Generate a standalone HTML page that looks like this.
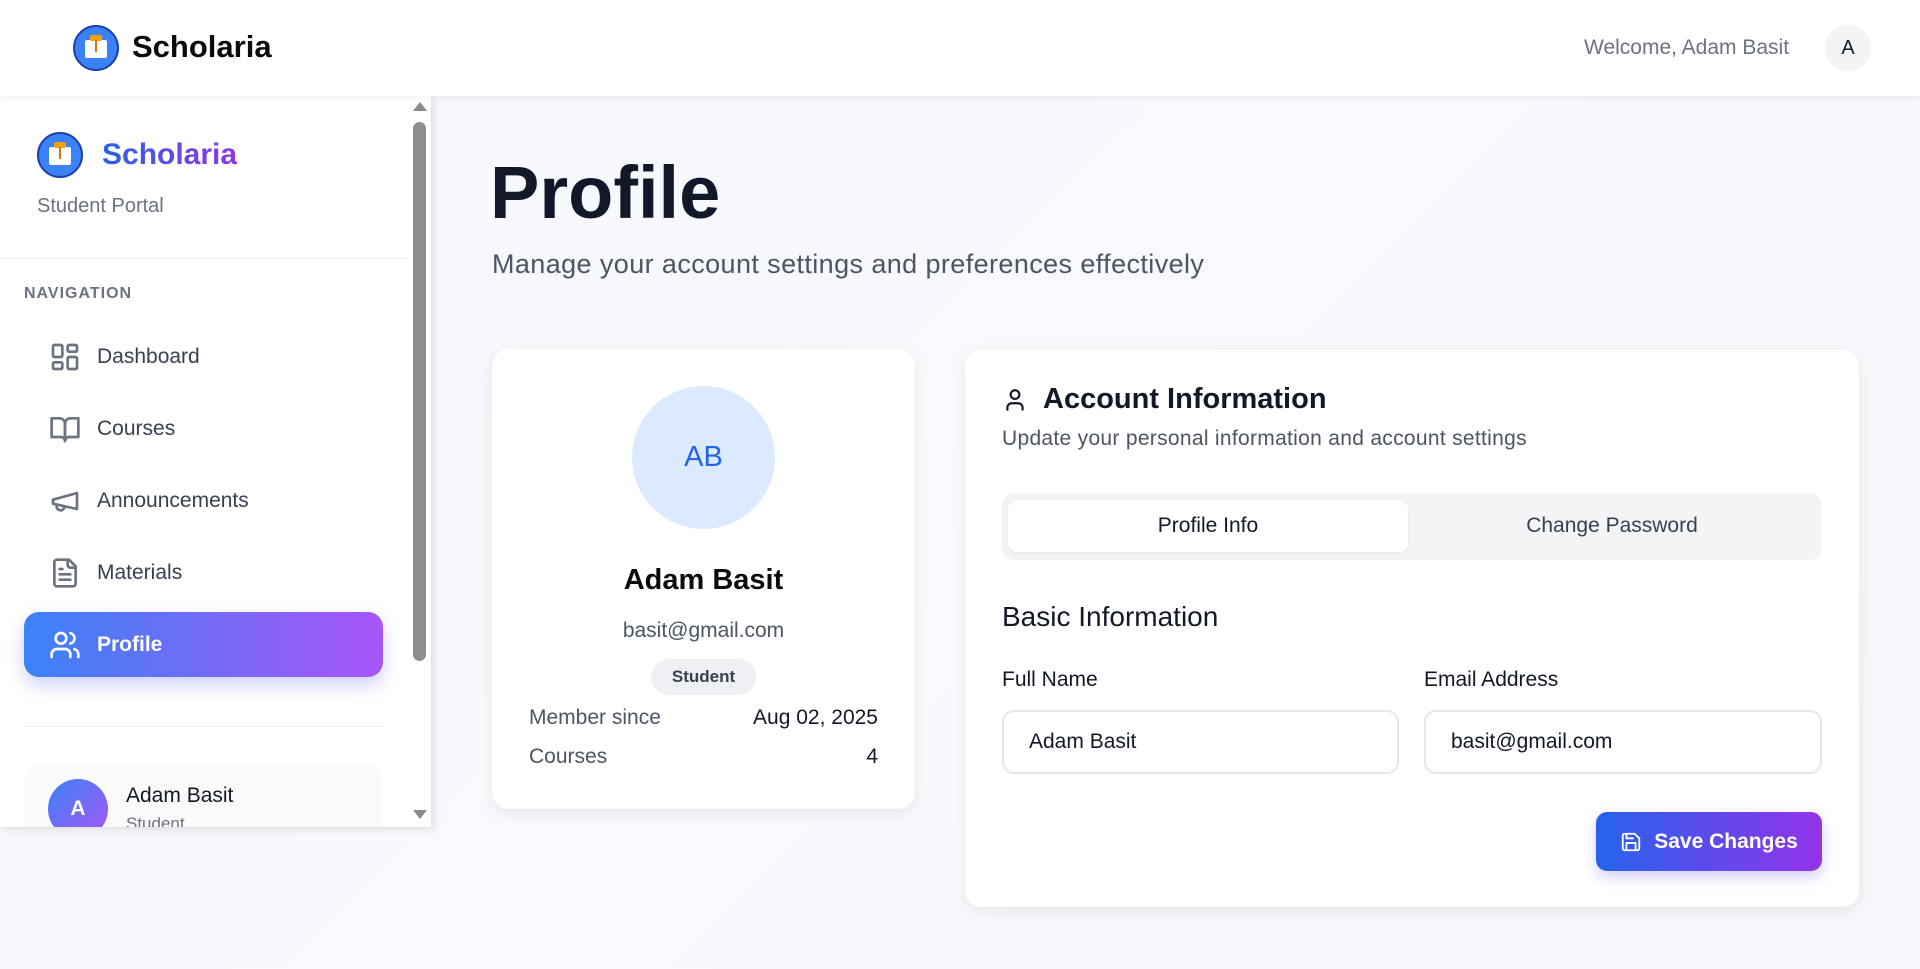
<!DOCTYPE html>
<html><head><meta charset="utf-8"><style>
*{box-sizing:border-box;margin:0;padding:0}
body{width:1920px;height:969px;overflow:hidden;font-family:"Liberation Sans",sans-serif;background:linear-gradient(135deg,#f5f7fd 0%,#f8f9fc 50%,#f6f7fb 100%);position:relative;color:#111827}
.a{position:absolute}
.hdr{left:0;top:0;width:1920px;height:96px;background:#fff;box-shadow:0 2px 6px rgba(0,0,0,.06);z-index:3}
.logo{width:46px;height:46px;border-radius:50%;background:#3b82f6;border:2px solid #1e40af}
.logo i{position:absolute;left:10px;top:13px;width:22px;height:18px;background:#fff;border-radius:2px}
.logo b{position:absolute;left:15px;top:8px;width:12px;height:6px;background:#f59e0b;border-radius:2px}
.logo u{position:absolute;left:20px;top:13px;width:2px;height:12px;background:#d97706}
.side{left:0;top:96px;width:431px;height:731px;background:#fff;box-shadow:2px 2px 8px rgba(0,0,0,.12);z-index:2;overflow:hidden}
.nav{left:49px;width:340px;height:40px;font-size:21px;color:#374151;display:flex;align-items:center;gap:16px}
.nav svg{width:32px;height:32px;stroke:#6b7280;fill:none;stroke-width:2;stroke-linecap:round;stroke-linejoin:round}
.card{background:#fff;border-radius:17px;box-shadow:0 4px 14px rgba(0,0,0,.07)}
.inp{height:64px;border:2px solid #e5e7eb;border-radius:12px;background:#fff;font-size:21px;padding-left:25px;line-height:60px;color:#111827}
.lbl{font-size:21px;color:#111827}
</style></head><body>
<div class="a hdr">
  <div class="a logo" style="left:73px;top:25px"><i></i><b></b><u></u></div>
  <div class="a" style="left:132px;top:29px;font-size:31px;font-weight:bold;color:#0b0b0b">Scholaria</div>
  <div class="a" style="left:1584px;top:36px;font-size:21px;color:#6b7280">Welcome, Adam Basit</div>
  <div class="a" style="left:1825px;top:25px;width:46px;height:46px;border-radius:50%;background:#f3f4f6;text-align:center;line-height:46px;font-size:20px">A</div>
</div>
<div class="a side">
  <div class="a logo" style="left:37px;top:36px"><i></i><b></b><u></u></div>
  <div class="a" style="left:102px;top:42px;font-size:30px;font-weight:bold;background:linear-gradient(90deg,#2563eb,#9333ea);-webkit-background-clip:text;background-clip:text;color:transparent">Scholaria</div>
  <div class="a" style="left:37px;top:99px;font-size:20px;color:#6b7280">Student Portal</div>
  <div class="a" style="left:0;top:162px;width:408px;height:1px;background:#eceef1"></div>
  <div class="a" style="left:24px;top:189px;font-size:16px;font-weight:bold;color:#6b7280;letter-spacing:1px">NAVIGATION</div>
  <div class="a nav" style="top:241px"><svg viewBox="0 0 24 24"><rect x="3" y="3" width="7" height="9" rx="1"/><rect x="14" y="3" width="7" height="5" rx="1"/><rect x="14" y="12" width="7" height="9" rx="1"/><rect x="3" y="16" width="7" height="5" rx="1"/></svg>Dashboard</div>
  <div class="a nav" style="top:313px"><svg viewBox="0 0 24 24"><path d="M2 4h6a4 4 0 0 1 4 4v13a3 3 0 0 0-3-3H2z"/><path d="M22 4h-6a4 4 0 0 0-4 4v13a3 3 0 0 1 3-3h7z"/></svg>Courses</div>
  <div class="a nav" style="top:385px"><svg viewBox="0 0 24 24"><path d="M3 11l18-5v12L3 14z"/><path d="M11.6 16.8a3 3 0 1 1-5.8-1.6"/></svg>Announcements</div>
  <div class="a nav" style="top:457px"><svg viewBox="0 0 24 24"><path d="M15 2H6a2 2 0 0 0-2 2v16a2 2 0 0 0 2 2h12a2 2 0 0 0 2-2V7z"/><path d="M14 2v4a2 2 0 0 0 2 2h4M10 9H8M16 13H8M16 17H8"/></svg>Materials</div>
  <div class="a" style="left:24px;top:516px;width:359px;height:65px;border-radius:15px;background:linear-gradient(90deg,#3b82f6,#a855f7);box-shadow:0 8px 18px rgba(99,102,241,.3)"></div>
  <div class="a nav" style="top:529px;color:#fff;font-weight:bold"><svg viewBox="0 0 24 24" style="stroke:#fff"><path d="M16 21v-2a4 4 0 0 0-4-4H6a4 4 0 0 0-4 4v2"/><circle cx="9" cy="7" r="4"/><path d="M22 21v-2a4 4 0 0 0-3-3.9M16 3.1a4 4 0 0 1 0 7.8"/></svg>Profile</div>
  <div class="a" style="left:24px;top:630px;width:359px;height:1px;background:#eceef1"></div>
  <div class="a" style="left:24px;top:670px;width:359px;height:90px;border-radius:14px;background:#fafafb"></div>
  <div class="a" style="left:48px;top:683px;width:60px;height:60px;border-radius:50%;background:linear-gradient(135deg,#3b82f6,#a855f7);color:#fff;font-weight:bold;font-size:21px;text-align:center;line-height:60px">A</div>
  <div class="a" style="left:126px;top:688px;font-size:21px;color:#111827">Adam Basit</div>
  <div class="a" style="left:126px;top:718px;font-size:17px;color:#6b7280">Student</div>
  <div class="a" style="left:413px;top:6px;width:0;height:0;border-left:7px solid transparent;border-right:7px solid transparent;border-bottom:9px solid #8a8a8a"></div>
  <div class="a" style="left:413px;top:26px;width:13px;height:539px;border-radius:7px;background:#8e8e8e"></div>
  <div class="a" style="left:413px;top:714px;width:0;height:0;border-left:7px solid transparent;border-right:7px solid transparent;border-top:9px solid #8a8a8a"></div>
</div>

<div class="a" style="left:490px;top:150px;font-size:74px;font-weight:bold;color:#111827">Profile</div>
<div class="a" style="left:492px;top:249px;font-size:27px;letter-spacing:.4px;color:#4b5563">Manage your account settings and preferences effectively</div>

<div class="a card" style="left:492px;top:349px;width:423px;height:460px">
  <div class="a" style="left:140px;top:37px;width:143px;height:143px;border-radius:50%;background:#dbeafe;color:#2563eb;font-size:29px;text-align:center;line-height:143px">AB</div>
  <div class="a" style="left:0;top:215px;width:423px;text-align:center;font-size:29px;font-weight:bold;color:#0b0b0b">Adam Basit</div>
  <div class="a" style="left:0;top:270px;width:423px;text-align:center;font-size:21px;color:#4b5563">basit@gmail.com</div>
  <div class="a" style="left:159px;top:310px;width:105px;height:36px;border-radius:18px;background:#eef0f3;text-align:center;line-height:36px;font-size:17px;font-weight:bold;color:#374151">Student</div>
  <div class="a" style="left:37px;top:357px;font-size:21px;color:#4b5563">Member since</div>
  <div class="a" style="right:37px;top:357px;font-size:21px;color:#111827">Aug 02, 2025</div>
  <div class="a" style="left:37px;top:396px;font-size:21px;color:#4b5563">Courses</div>
  <div class="a" style="right:37px;top:396px;font-size:21px;color:#111827">4</div>
</div>

<div class="a card" style="left:965px;top:350px;width:894px;height:557px">
  <svg class="a" style="left:37px;top:37px" width="26" height="26" viewBox="0 0 24 24" fill="none" stroke="#111827" stroke-width="2" stroke-linecap="round"><circle cx="12" cy="7" r="4"/><path d="M19 21v-2a4 4 0 0 0-4-4H9a4 4 0 0 0-4 4v2"/></svg>
  <div class="a" style="left:78px;top:33px;font-size:29px;font-weight:bold;color:#111827">Account Information</div>
  <div class="a" style="left:37px;top:77px;font-size:21px;letter-spacing:.3px;color:#4b5563">Update your personal information and account settings</div>
  <div class="a" style="left:37px;top:143px;width:820px;height:67px;border-radius:12px;background:#f3f4f6"></div>
  <div class="a" style="left:43px;top:150px;width:400px;height:52px;border-radius:9px;background:#fff;box-shadow:0 1px 3px rgba(0,0,0,.06);text-align:center;line-height:52px;font-size:21px;color:#111827">Profile Info</div>
  <div class="a" style="left:443px;top:150px;width:408px;height:52px;text-align:center;line-height:52px;font-size:21px;color:#374151">Change Password</div>
  <div class="a" style="left:37px;top:251px;font-size:28px;color:#111827">Basic Information</div>
  <div class="a lbl" style="left:37px;top:318px">Full Name</div>
  <div class="a lbl" style="left:459px;top:318px">Email Address</div>
  <div class="a inp" style="left:37px;top:360px;width:397px">Adam Basit</div>
  <div class="a inp" style="left:459px;top:360px;width:398px">basit@gmail.com</div>
  <div class="a" style="left:631px;top:462px;width:226px;height:59px;border-radius:11px;background:linear-gradient(90deg,#2563eb,#9333ea);box-shadow:0 6px 14px rgba(79,70,229,.25);color:#fff;font-size:21px;font-weight:bold;display:flex;align-items:center;justify-content:center;gap:12px">
    <svg width="22" height="22" viewBox="0 0 24 24" fill="none" stroke="#fff" stroke-width="2" stroke-linejoin="round"><path d="M19 21H5a2 2 0 0 1-2-2V5a2 2 0 0 1 2-2h11l5 5v11a2 2 0 0 1-2 2z"/><path d="M17 21v-8H7v8M7 3v5h8"/></svg>Save Changes</div>
</div>
</body></html>
